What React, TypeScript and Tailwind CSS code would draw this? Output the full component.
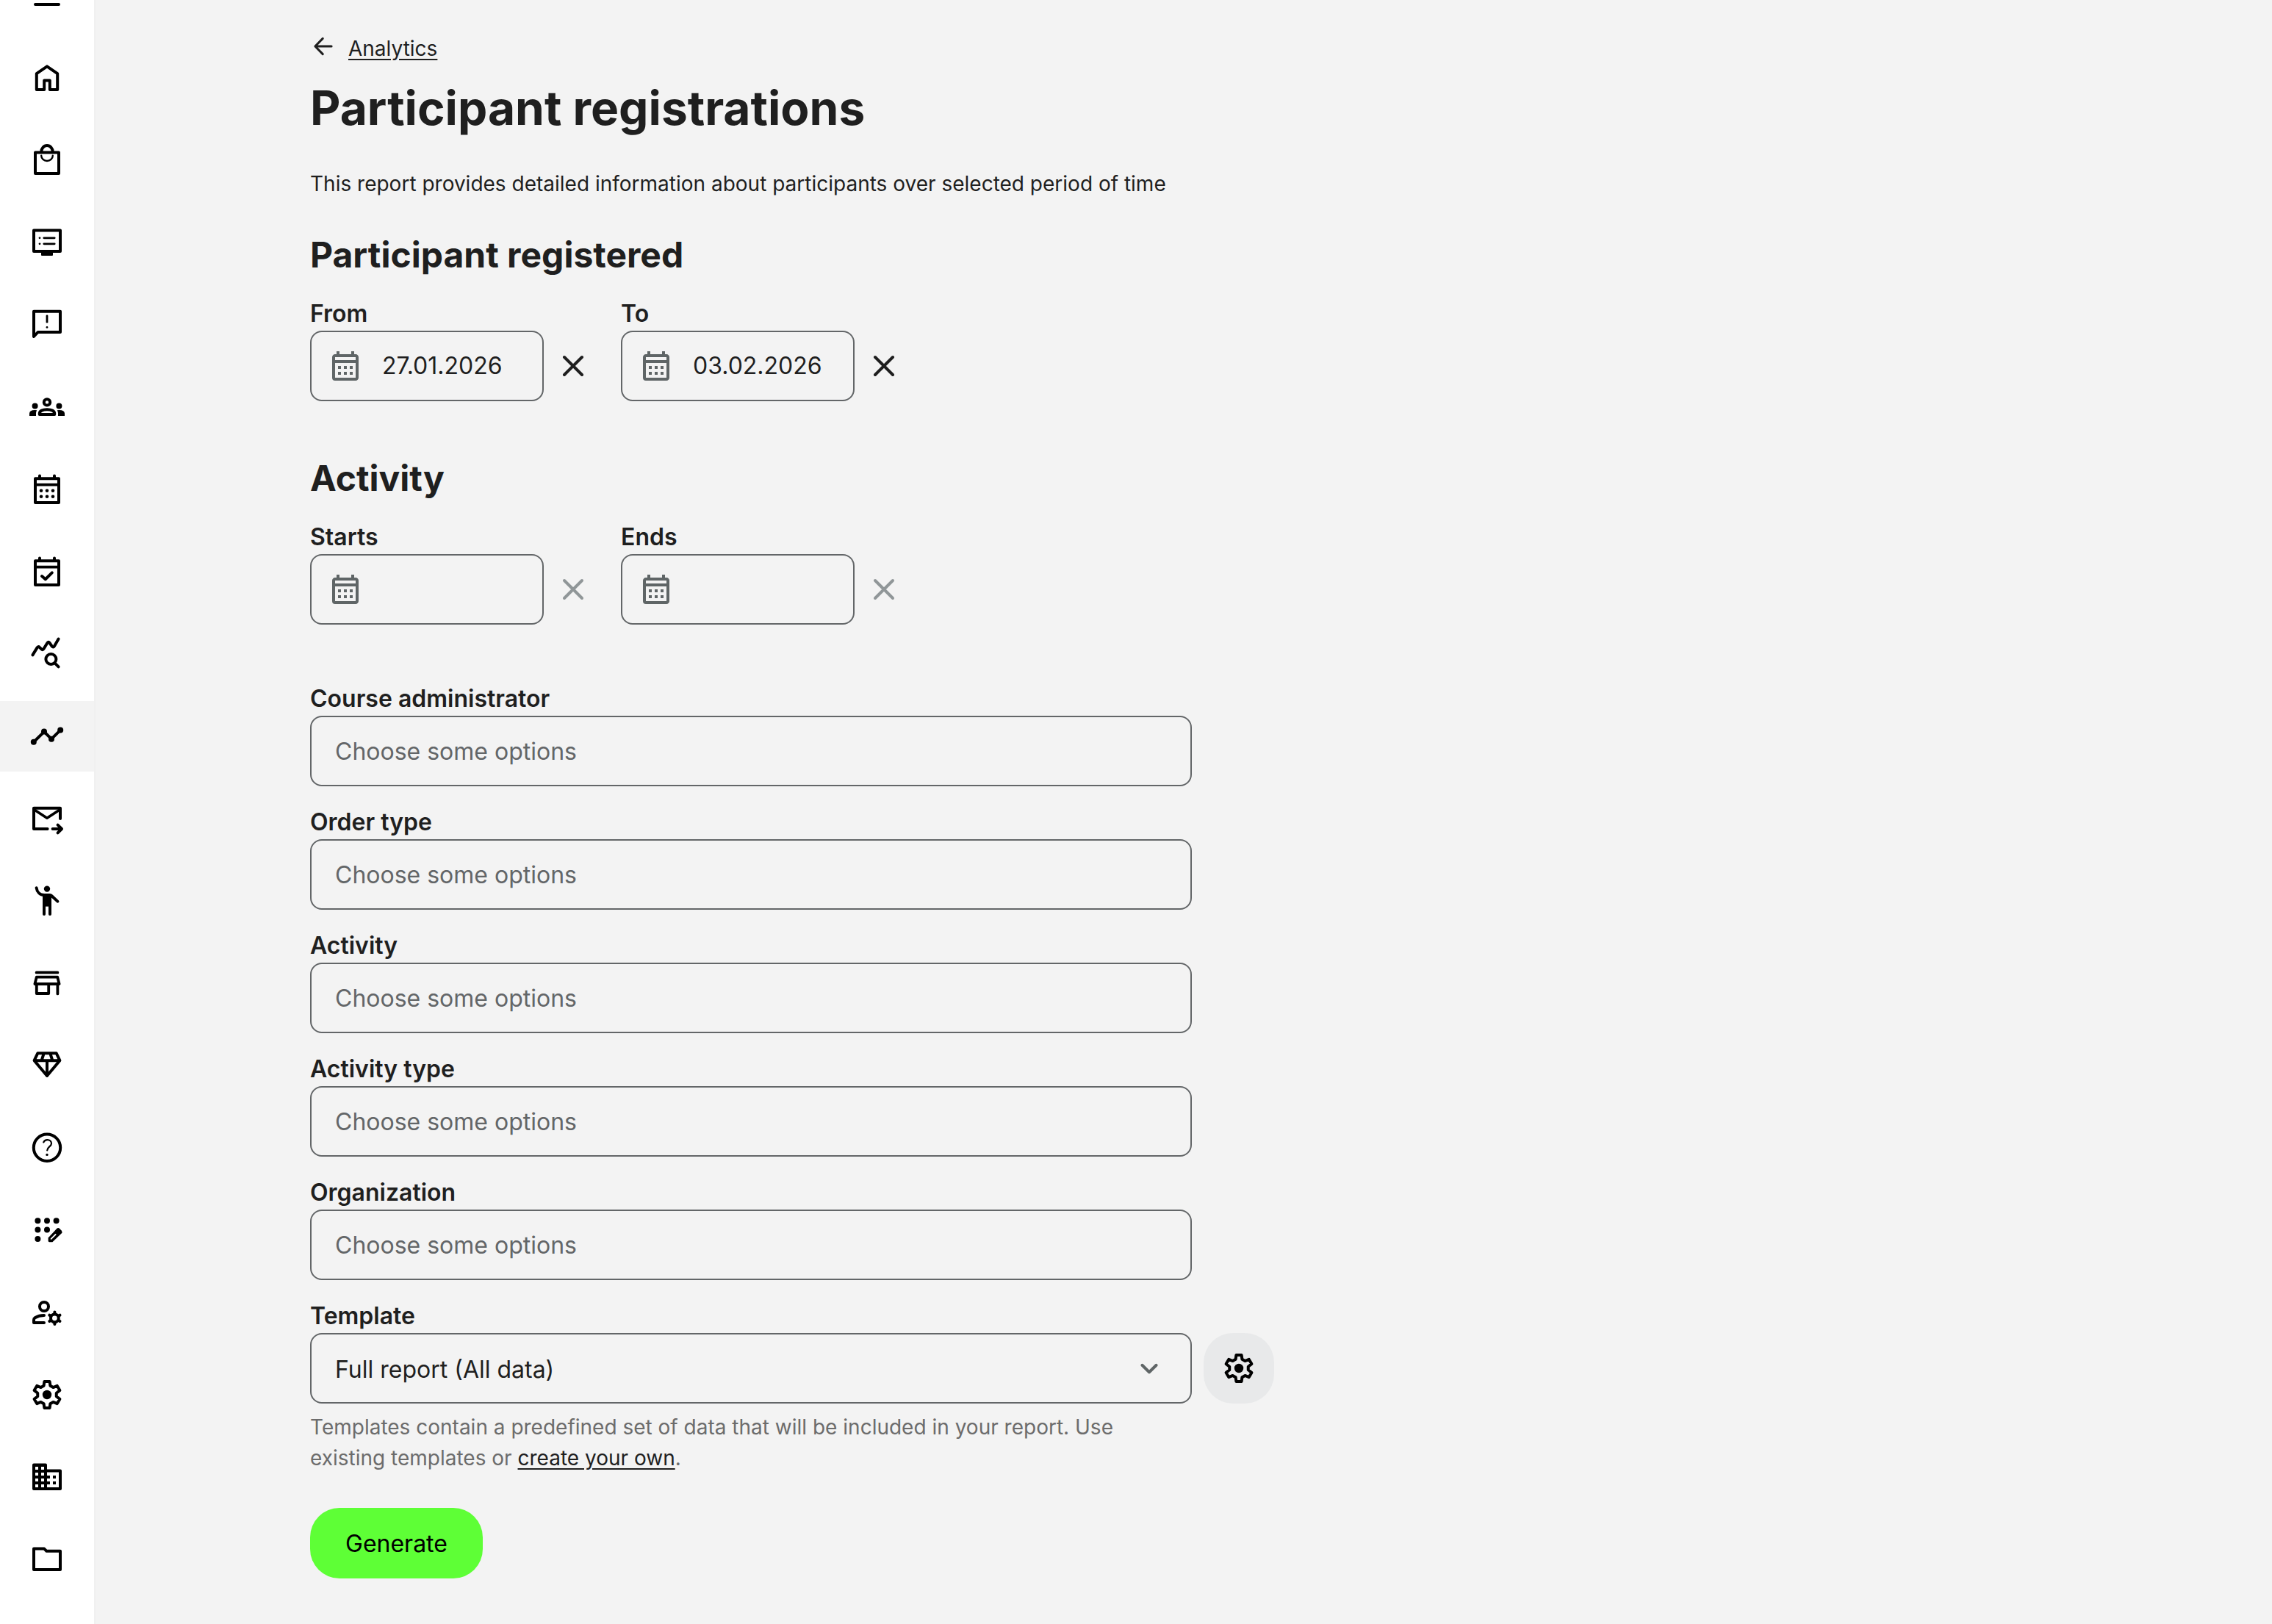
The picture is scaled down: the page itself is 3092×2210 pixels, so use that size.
import { useState, type ReactNode } from "react";
import { MdOutlineCalendarMonth } from "react-icons/md";

function Icon({ children, className = "size-12" }: { children: ReactNode; className?: string }) {
  return (
    <svg
      viewBox="0 0 24 24"
      fill="none"
      stroke="currentColor"
      strokeWidth={2}
      strokeLinecap="round"
      strokeLinejoin="round"
      aria-hidden="true"
      className={`${className} shrink-0`}
    >
      {children}
    </svg>
  );
}

// Six teeth, each one a trapezoid turned by a further 60 degrees.
const gearOutline = [0, 60, 120, 180, 240, 300]
  .flatMap((deg) => {
    const a = (deg * Math.PI) / 180;
    return [
      [-2.2, -6.1],
      [-1.8, -9],
      [1.8, -9],
      [2.2, -6.1],
    ].map(([x, y]) => {
      const px = 12 + x * Math.cos(a) - y * Math.sin(a);
      const py = 12 + x * Math.sin(a) + y * Math.cos(a);
      return `${px.toFixed(2)},${py.toFixed(2)}`;
    });
  })
  .join(" ");

function Dot({ x, y, r }: { x: number; y: number; r: number }) {
  return <circle cx={x} cy={y} r={r} fill="currentColor" stroke="none" />;
}

function GearIcon() {
  return (
    <Icon>
      <polygon points={gearOutline} />
      <Dot x={12} y={12} r={3.1} />
    </Icon>
  );
}

const calendarFrame = (
  <>
    <path d="M4 4.6h16V21H4z" />
    <path d="M4 8.8h16" strokeWidth={1.8} />
    <path d="M7 2.8v1.6M17 2.8v1.6" />
  </>
);

const navItems: { label: string; icon: ReactNode; active?: boolean }[] = [
  {
    label: "Home",
    icon: (
      <Icon>
        <path d="M4.9 20V9.1L12 4.2l7.1 4.9V20h-5.2v-6.2h-3.8V20z" />
      </Icon>
    ),
  },
  {
    label: "Shop",
    icon: (
      <Icon>
        <path d="M4 6.8h16V21H4z" />
        <path d="M8.1 6.4a3.9 4.4 0 0 1 7.8 0" />
        <path d="M8.1 8.9a3.9 3.6 0 0 0 7.8 0" strokeWidth={1.2} />
      </Icon>
    ),
  },
  {
    label: "Courses",
    icon: (
      <Icon>
        <path d="M3 3.7h18V18H3z" />
        <path d="M8 18.5h8v2q0 .5-.5.5h-7q-.5 0-.5-.5z" fill="currentColor" stroke="none" />
        <path d="M9.9 8.9h7.2M9.9 12.9h7.2" strokeWidth={1.4} />
        <Dot x={7} y={8.9} r={0.7} />
        <Dot x={7} y={12.9} r={0.7} />
      </Icon>
    ),
  },
  {
    label: "Feedback",
    icon: (
      <Icon>
        <path d="M3 20V2.9h18V17H5.8z" />
        <path d="M12 5.9v4.2" strokeWidth={1.4} />
        <Dot x={12} y={13.7} r={0.7} />
      </Icon>
    ),
  },
  {
    label: "Groups",
    icon: (
      <Icon>
        <circle cx="12" cy="8.7" r="2.1" />
        <path d="M6.9 17v-.8c0-1.6 2.3-2.6 5.1-2.6s5.1 1 5.1 2.6v.8z" />
        <Dot x={3.8} y={11.3} r={2} />
        <Dot x={20.2} y={11.3} r={2} />
        <path
          d="M5.1 14.1Q4.6 15 4.5 16v2H0v-1.6Q0 14 3.8 14zM18.9 14.1q.5.9.6 1.9v2H24v-1.6Q24 14 20.2 14z"
          fill="currentColor"
          stroke="none"
        />
      </Icon>
    ),
  },
  {
    label: "Calendar",
    icon: (
      <Icon>
        {calendarFrame}
        {[8, 12, 16].map((x) => (
          <g key={x}>
            <Dot x={x} y={12.9} r={1.15} />
            <Dot x={x} y={16.9} r={1.15} />
          </g>
        ))}
      </Icon>
    ),
  },
  {
    label: "Bookings",
    icon: (
      <Icon>
        {calendarFrame}
        <path d="M8.5 15l2.4 2.1 4.5-4.4" />
      </Icon>
    ),
  },
  {
    label: "Insights",
    icon: (
      <Icon>
        <path d="M2.2 12.7l3-4.9q.8-1.3 1.7-.4l1.3 1.3q.9.9 1.6-.3l2.3-3.8q.8-1.3 1.7-.1l1.5 2.2q.9 1.2 1.7-.1l2.8-4.8" />
        <circle cx="14.7" cy="15.5" r="3.5" />
        <path d="M17.3 18.2l2.5 2.5" />
      </Icon>
    ),
  },
  {
    label: "Analytics",
    active: true,
    icon: (
      <Icon>
        <path d="M2.8 16L10 8.9l5 4.9 6.2-6.1" />
        <Dot x={2.9} y={15.9} r={2} />
        <Dot x={10} y={8.8} r={2} />
        <Dot x={15} y={13.9} r={2} />
        <Dot x={21.1} y={7.8} r={2} />
      </Icon>
    ),
  },
  {
    label: "Mailings",
    icon: (
      <Icon>
        <path d="M21 12V4.9H3V19h9.3" />
        <path d="M3.4 6l8.6 5.6L20.6 6" strokeWidth={1.8} />
        <path d="M15.8 19H22M19.3 16.3L22 19l-2.7 2.7" />
      </Icon>
    ),
  },
  {
    label: "Participants",
    icon: (
      <Icon>
        <Dot x={12} y={3.8} r={2.1} />
        <path d="M4.8 3.1C5.2 6 7.3 8 10.1 8H14q.6 0 1.1.5l4.1 3.8" />
        <path d="M9 7.5h6v8.3H9z" fill="currentColor" stroke="none" />
        <path d="M10 15v6M14 15v6" />
      </Icon>
    ),
  },
  {
    label: "Store",
    icon: (
      <Icon>
        <path
          d="M4.8 4.7h14.4M4.9 7.8h14.2l1.2 4.7H3.7zM4.9 12.5V19h8.2v-6.5M19.2 12.5v6.7"
          strokeWidth={1.9}
        />
      </Icon>
    ),
  },
  {
    label: "Membership",
    icon: (
      <Icon>
        <path d="M5.7 3.6h12.6l2.4 5L12 19 3.3 8.6zM3.3 8.6h17.4M12 8.6V19M9.9 3.6l-1.6 5M14.1 3.6l1.6 5" />
      </Icon>
    ),
  },
  {
    label: "Help",
    icon: (
      <Icon>
        <circle cx="12" cy="11.9" r="9.1" />
        <path
          d="M9.6 8.2Q10.4 6.6 12.2 6.6c1.7 0 2.8 1.1 2.8 2.5 0 1.9-2.9 2.4-2.9 4.6"
          strokeWidth={1.1}
        />
        <Dot x={12} y={16.7} r={0.85} />
      </Icon>
    ),
  },
  {
    label: "Registration forms",
    icon: (
      <Icon>
        {[
          [5.7, 5.6],
          [12, 5.6],
          [18.3, 5.6],
          [5.7, 11.8],
          [12, 11.8],
          [5.7, 18],
        ].map(([x, y]) => (
          <Dot key={`${x}-${y}`} x={x} y={y} r={2} />
        ))}
        <path
          d="M12.8 17.3v2q0 .8.8.8h2.1l6.1-5.9q.9-1 0-2l-1.2-1.2q-1-.9-2 0z"
          fill="currentColor"
          stroke="none"
        />
        <path d="M14.8 17.9l3-2.9" stroke="white" strokeWidth={0.9} />
      </Icon>
    ),
  },
  {
    label: "User management",
    icon: (
      <Icon>
        <circle cx="10" cy="8" r="3" />
        <path d="M10 14q-3.5 0-6.2 1.6Q3 16.1 3 17.1V19h7" />
        <circle cx="17.2" cy="15.9" r="2.7" />
        {[0, 60, 120, 180, 240, 300].map((deg) => (
          <path key={deg} d="M17.2 12.6v-.8" transform={`rotate(${deg} 17.2 15.9)`} />
        ))}
      </Icon>
    ),
  },
  { label: "Settings", icon: <GearIcon /> },
  {
    label: "Organizations",
    icon: (
      <Icon>
        <path
          fill="currentColor"
          stroke="none"
          fillRule="evenodd"
          d="M3 2.7h8q1 0 1 1v3.1h9q1 0 1 1V20q0 1-1 1H3q-1 0-1-1V3.7q0-1 1-1zM4 5v2h2V5zM8 5v2h2V5zM4 9v2h2V9zM8 9v2h2V9zM4 13v2h2v-2zM8 13v2h2v-2zM4 17v2h2v-2zM8 17v2h2v-2zM12 8.7V11h2v2h-2v2h2v2h-2v2h8V8.7zM16 11h2v2h-2zM16 15h2v2h-2z"
        />
      </Icon>
    ),
  },
  {
    label: "Files",
    icon: (
      <Icon>
        <path d="M3 4.8h7.1l1.6 1.6H21V19H3z" />
      </Icon>
    ),
  },
];

function Sidebar() {
  return (
    <nav aria-label="Main" className="flex w-32 shrink-0 flex-col gap-4 bg-white text-black">
      <button
        type="button"
        aria-label="Menu"
        className="flex h-[42px] items-end justify-center overflow-hidden pb-6"
      >
        <Icon>
          <path d="M4 6h16M4 12h16M4 18h16" />
        </Icon>
      </button>
      {navItems.map((item) => (
        <a
          key={item.label}
          href="#"
          aria-label={item.label}
          aria-current={item.active ? "page" : undefined}
          className={`flex h-24 items-center justify-center ${item.active ? "bg-[#f3f3f3]" : ""}`}
        >
          {item.icon}
        </a>
      ))}
    </nav>
  );
}

function FieldLabel({ htmlFor, children }: { htmlFor: string; children: ReactNode }) {
  return (
    <label htmlFor={htmlFor} className="block text-[32px] leading-[46px] font-semibold">
      {children}
    </label>
  );
}

function DateField({ id, label, initial = "" }: { id: string; label: string; initial?: string }) {
  const [value, setValue] = useState(initial);
  return (
    <div>
      <FieldLabel htmlFor={id}>{label}</FieldLabel>
      <div className="flex items-center gap-4">
        <div className="flex h-24 w-[318px] items-center gap-[26px] rounded-2xl border-2 border-[#636668] pl-[22px]">
          <MdOutlineCalendarMonth className="size-12 shrink-0 text-[#5f6566]" aria-hidden="true" />
          <input
            id={id}
            type="text"
            value={value}
            onChange={(e) => setValue(e.target.value)}
            className="w-full min-w-0 bg-transparent text-[32px] outline-none"
          />
        </div>
        <button
          type="button"
          aria-label={`Clear ${label}`}
          disabled={!value}
          onClick={() => setValue("")}
          className="disabled:text-[#909698]"
        >
          <Icon>
            <path d="M6 6l12 12M18 6L6 18" />
          </Icon>
        </button>
      </div>
    </div>
  );
}

function OptionsField({ id, label }: { id: string; label: string }) {
  return (
    <div>
      <FieldLabel htmlFor={id}>{label}</FieldLabel>
      <input
        id={id}
        type="text"
        placeholder="Choose some options"
        className="block h-24 w-full rounded-2xl border-2 border-[#636668] bg-transparent px-8 text-[32px] outline-none placeholder:text-[#636668]"
      />
    </div>
  );
}

export default function App() {
  return (
    <div className="flex min-h-screen bg-[#f3f3f3] font-['Inter',sans-serif] text-[#1f1f1f]">
      <Sidebar />
      <main className="min-w-0 grow border-l-2 border-[#f0f0f0] pt-[45px] pr-8 pb-[62px] pl-[292px]">
        <div className="flex items-start gap-4">
          <Icon className="size-9">
            <path d="M19.4 12H4.9M11.5 4.9L4.6 12l6.9 7.1" />
          </Icon>
          <a href="#" className="text-[28px] leading-[42px] underline underline-offset-4">
            Analytics
          </a>
        </div>
        <h1 className="mt-5 text-[64px] leading-20 font-bold">Participant registrations</h1>
        <p className="mt-[42px] text-[28px] leading-[42px]">
          This report provides detailed information about participants over selected period of time
        </p>

        <form onSubmit={(e) => e.preventDefault()}>
          <section className="mt-11">
            <h2 className="mb-[25px] text-5xl leading-16 font-bold">Participant registered</h2>
            <div className="flex flex-wrap gap-[41px]">
              <DateField id="from" label="From" initial="27.01.2026" />
              <DateField id="to" label="To" initial="03.02.2026" />
            </div>
          </section>

          <section className="mt-[73px]">
            <h2 className="mb-[25px] text-5xl leading-16 font-bold">Activity</h2>
            <div className="flex flex-wrap gap-[41px]">
              <DateField id="starts" label="Starts" />
              <DateField id="ends" label="Ends" />
            </div>
          </section>

          <div className="mt-[78px] mb-[26px] flex max-w-[1200px] flex-col gap-[26px]">
            <OptionsField id="administrator" label="Course administrator" />
            <OptionsField id="order-type" label="Order type" />
            <OptionsField id="activity" label="Activity" />
            <OptionsField id="activity-type" label="Activity type" />
            <OptionsField id="organization" label="Organization" />
          </div>

          <FieldLabel htmlFor="template">Template</FieldLabel>
          <div className="flex items-center gap-4">
            <div className="relative w-full max-w-[1200px]">
              <select
                id="template"
                className="block h-24 w-full appearance-none rounded-2xl border-2 border-[#636668] bg-transparent pt-1 pr-24 pl-8 text-[32px]"
              >
                <option>Full report (All data)</option>
              </select>
              <div className="pointer-events-none absolute inset-y-0 right-0 flex items-center pr-[34px] text-[#5f6566]">
                <Icon>
                  <path d="M7.2 9.9l4.8 4.7 4.8-4.7" />
                </Icon>
              </div>
            </div>
            <button
              type="button"
              aria-label="Template settings"
              className="flex size-24 shrink-0 items-center justify-center rounded-[40px] bg-[#e8e9ea] text-black"
            >
              <GearIcon />
            </button>
          </div>
          <p className="mt-[11px] max-w-[1120px] text-[28px] leading-[42px] text-[#6c6c6c]">
            Templates contain a predefined set of data that will be included in your report. Use
            existing templates or{" "}
            <a href="#" className="text-[#1f1f1f] underline underline-offset-4">
              create your own
            </a>
            .
          </p>
          <button
            type="submit"
            className="mt-[47px] h-24 rounded-[40px] bg-[#5eff36] px-12 pt-0.5 text-[32px] text-black"
          >
            Generate
          </button>
        </form>
      </main>
    </div>
  );
}
